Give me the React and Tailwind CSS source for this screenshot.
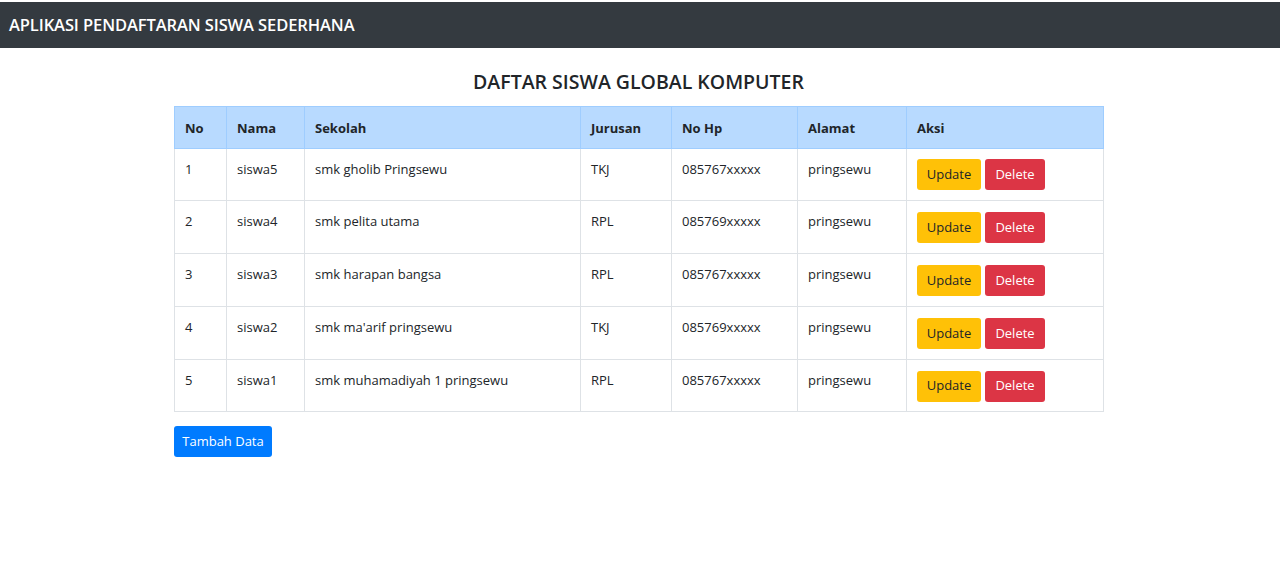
const siswa = [
  { no: 1, nama: 'siswa5', sekolah: 'smk gholib Pringsewu', jurusan: 'TKJ', hp: '085767xxxxx', alamat: 'pringsewu' },
  { no: 2, nama: 'siswa4', sekolah: 'smk pelita utama', jurusan: 'RPL', hp: '085769xxxxx', alamat: 'pringsewu' },
  { no: 3, nama: 'siswa3', sekolah: 'smk harapan bangsa', jurusan: 'RPL', hp: '085767xxxxx', alamat: 'pringsewu' },
  { no: 4, nama: 'siswa2', sekolah: "smk ma'arif pringsewu", jurusan: 'TKJ', hp: '085769xxxxx', alamat: 'pringsewu' },
  { no: 5, nama: 'siswa1', sekolah: 'smk muhamadiyah 1 pringsewu', jurusan: 'RPL', hp: '085767xxxxx', alamat: 'pringsewu' },
];

const App = () => {
  const th = 'border border-[#9fcdff] px-[10px] pt-[3px] text-left font-bold align-middle';
  const td = 'border border-[#dee2e6] px-[10px] pt-[11px] align-top';

  return (
    <div className="min-h-screen bg-white pt-[2px] text-[#212529] font-['Open_Sans','Noto_Sans',sans-serif]">
      {/* Navbar */}
      <nav className="h-[46px] bg-[#343a40] flex items-center px-[9px]">
        <span className="text-white text-[16.5px] font-semibold tracking-[-0.1px]">
          APLIKASI PENDAFTARAN SISWA SEDERHANA
        </span>
      </nav>

      <div className="w-[929px] ml-[174px]">
        {/* Title */}
        <h1 className="text-center text-[19.5px] font-semibold mt-[21px] mb-[11px] leading-[26px]">
          DAFTAR SISWA GLOBAL KOMPUTER
        </h1>

        {/* Table */}
        <table className="w-[929px] border-collapse table-fixed text-[13px]">
          <colgroup>
            <col className="w-[52px]" />
            <col className="w-[78px]" />
            <col className="w-[276px]" />
            <col className="w-[91px]" />
            <col className="w-[126px]" />
            <col className="w-[109px]" />
            <col className="w-[197px]" />
          </colgroup>
          <thead>
            <tr className="h-[41.5px] bg-[#b8daff]">
              <th className={th}>No</th>
              <th className={th}>Nama</th>
              <th className={th}>Sekolah</th>
              <th className={th}>Jurusan</th>
              <th className={th}>No Hp</th>
              <th className={th}>Alamat</th>
              <th className={th}>Aksi</th>
            </tr>
          </thead>
          <tbody>
            {siswa.map((s) => (
              <tr key={s.no} className="h-[52.8px]">
                <td className={td}>{s.no}</td>
                <td className={td}>{s.nama}</td>
                <td className={td}>{s.sekolah}</td>
                <td className={td}>{s.jurusan}</td>
                <td className={td}>{s.hp}</td>
                <td className={td}>{s.alamat}</td>
                <td className="border border-[#dee2e6] px-[10px] pt-[1px] align-middle">
                  <div className="flex gap-[4px]">
                    <button className="h-[31px] w-[64px] rounded-[3px] bg-[#ffc107] text-[#212529] text-[13px]">
                      Update
                    </button>
                    <button className="h-[31px] w-[60px] rounded-[3px] bg-[#dc3545] text-white text-[13px]">
                      Delete
                    </button>
                  </div>
                </td>
              </tr>
            ))}
          </tbody>
        </table>

        {/* Add button */}
        <button className="mt-[14px] h-[31px] w-[98px] rounded-[3px] bg-[#007bff] text-white text-[13px]">
          Tambah Data
        </button>
      </div>
    </div>
  );
};

export default App;
